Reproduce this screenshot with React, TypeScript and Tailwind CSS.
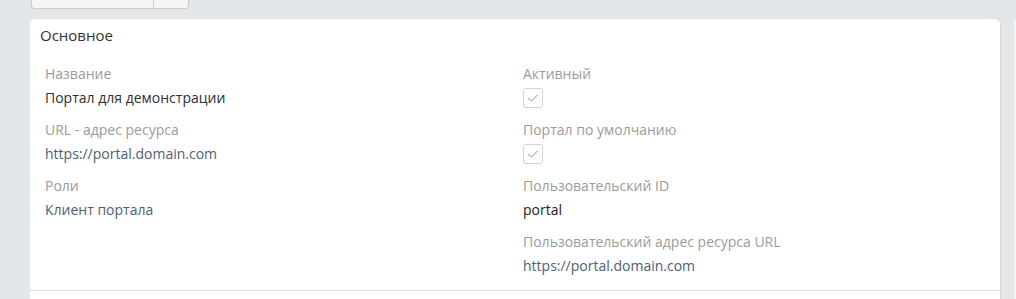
const Check = () => (
  <div className="flex h-[20px] w-[20px] items-center justify-center rounded-[3px] border border-[#d2d2d2] bg-white">
    <svg width="12" height="10" viewBox="0 0 12 10" fill="none">
      <path d="M1.5 5.5 L4.5 8 L10.5 2" stroke="#8a8a8a" strokeWidth="1" strokeLinecap="round" strokeLinejoin="round" />
    </svg>
  </div>
);

const Field = ({ label, children }: { label: string; children: React.ReactNode }) => (
  <div className="mb-[8px]">
    <div className="h-[24px] leading-[24px] text-[14px] text-[#9b9b9b]">{label}</div>
    <div className="flex h-[24px] items-center text-[14px] leading-[24px]">{children}</div>
  </div>
);

export default function App() {
  return (
    <div
      className="h-[299px] w-[1016px] overflow-hidden bg-[#e4e7ea]"
      style={{ fontFamily: '"Open Sans", sans-serif' }}
    >
      <div className="ml-[31px] flex h-[9px]">
        <div className="w-[123px] rounded-bl-[4px] border border-t-0 border-[#cccccc] bg-[#f5f5f5]" />
        <div className="w-[35px] rounded-br-[4px] border border-l-0 border-t-0 border-[#cccccc] bg-[#f5f5f5]" />
      </div>

      <div className="mt-[10px] flex">
        <div className="ml-[30px] w-[970px] rounded-t-[5px] bg-white shadow-[1px_0_2px_rgba(0,0,0,0.08)]">
          <div className="px-[10px] pt-[4px] text-[15px] leading-[24px] text-[#333333]">Основное</div>

          <div className="mt-[15px] grid grid-cols-[478px_1fr] pl-[15px] pb-[4px]">
            <div>
              <Field label="Название">
                <span className="text-[#2b2f36]">Портал для демонстрации</span>
              </Field>
              <Field label="URL - адрес ресурса">
                <span className="text-[#4e6075]">https://portal.domain.com</span>
              </Field>
              <Field label="Роли">
                <span className="text-[#4e6075]">Клиент портала</span>
              </Field>
            </div>
            <div>
              <Field label="Активный">
                <Check />
              </Field>
              <Field label="Портал по умолчанию">
                <Check />
              </Field>
              <Field label="Пользовательский ID">
                <span className="text-[#222222]">portal</span>
              </Field>
              <Field label="Пользовательский адрес ресурса URL">
                <span className="text-[#4e6075]">https://portal.domain.com</span>
              </Field>
            </div>
          </div>

          <div className="border-t border-[#dddddd] pt-[12px]" />
          <div className="h-[20px]" />
        </div>
        <div className="ml-[14px] h-[300px] flex-1 rounded-tl-[4px] bg-[#f3f4f5]" />
      </div>
    </div>
  );
}
